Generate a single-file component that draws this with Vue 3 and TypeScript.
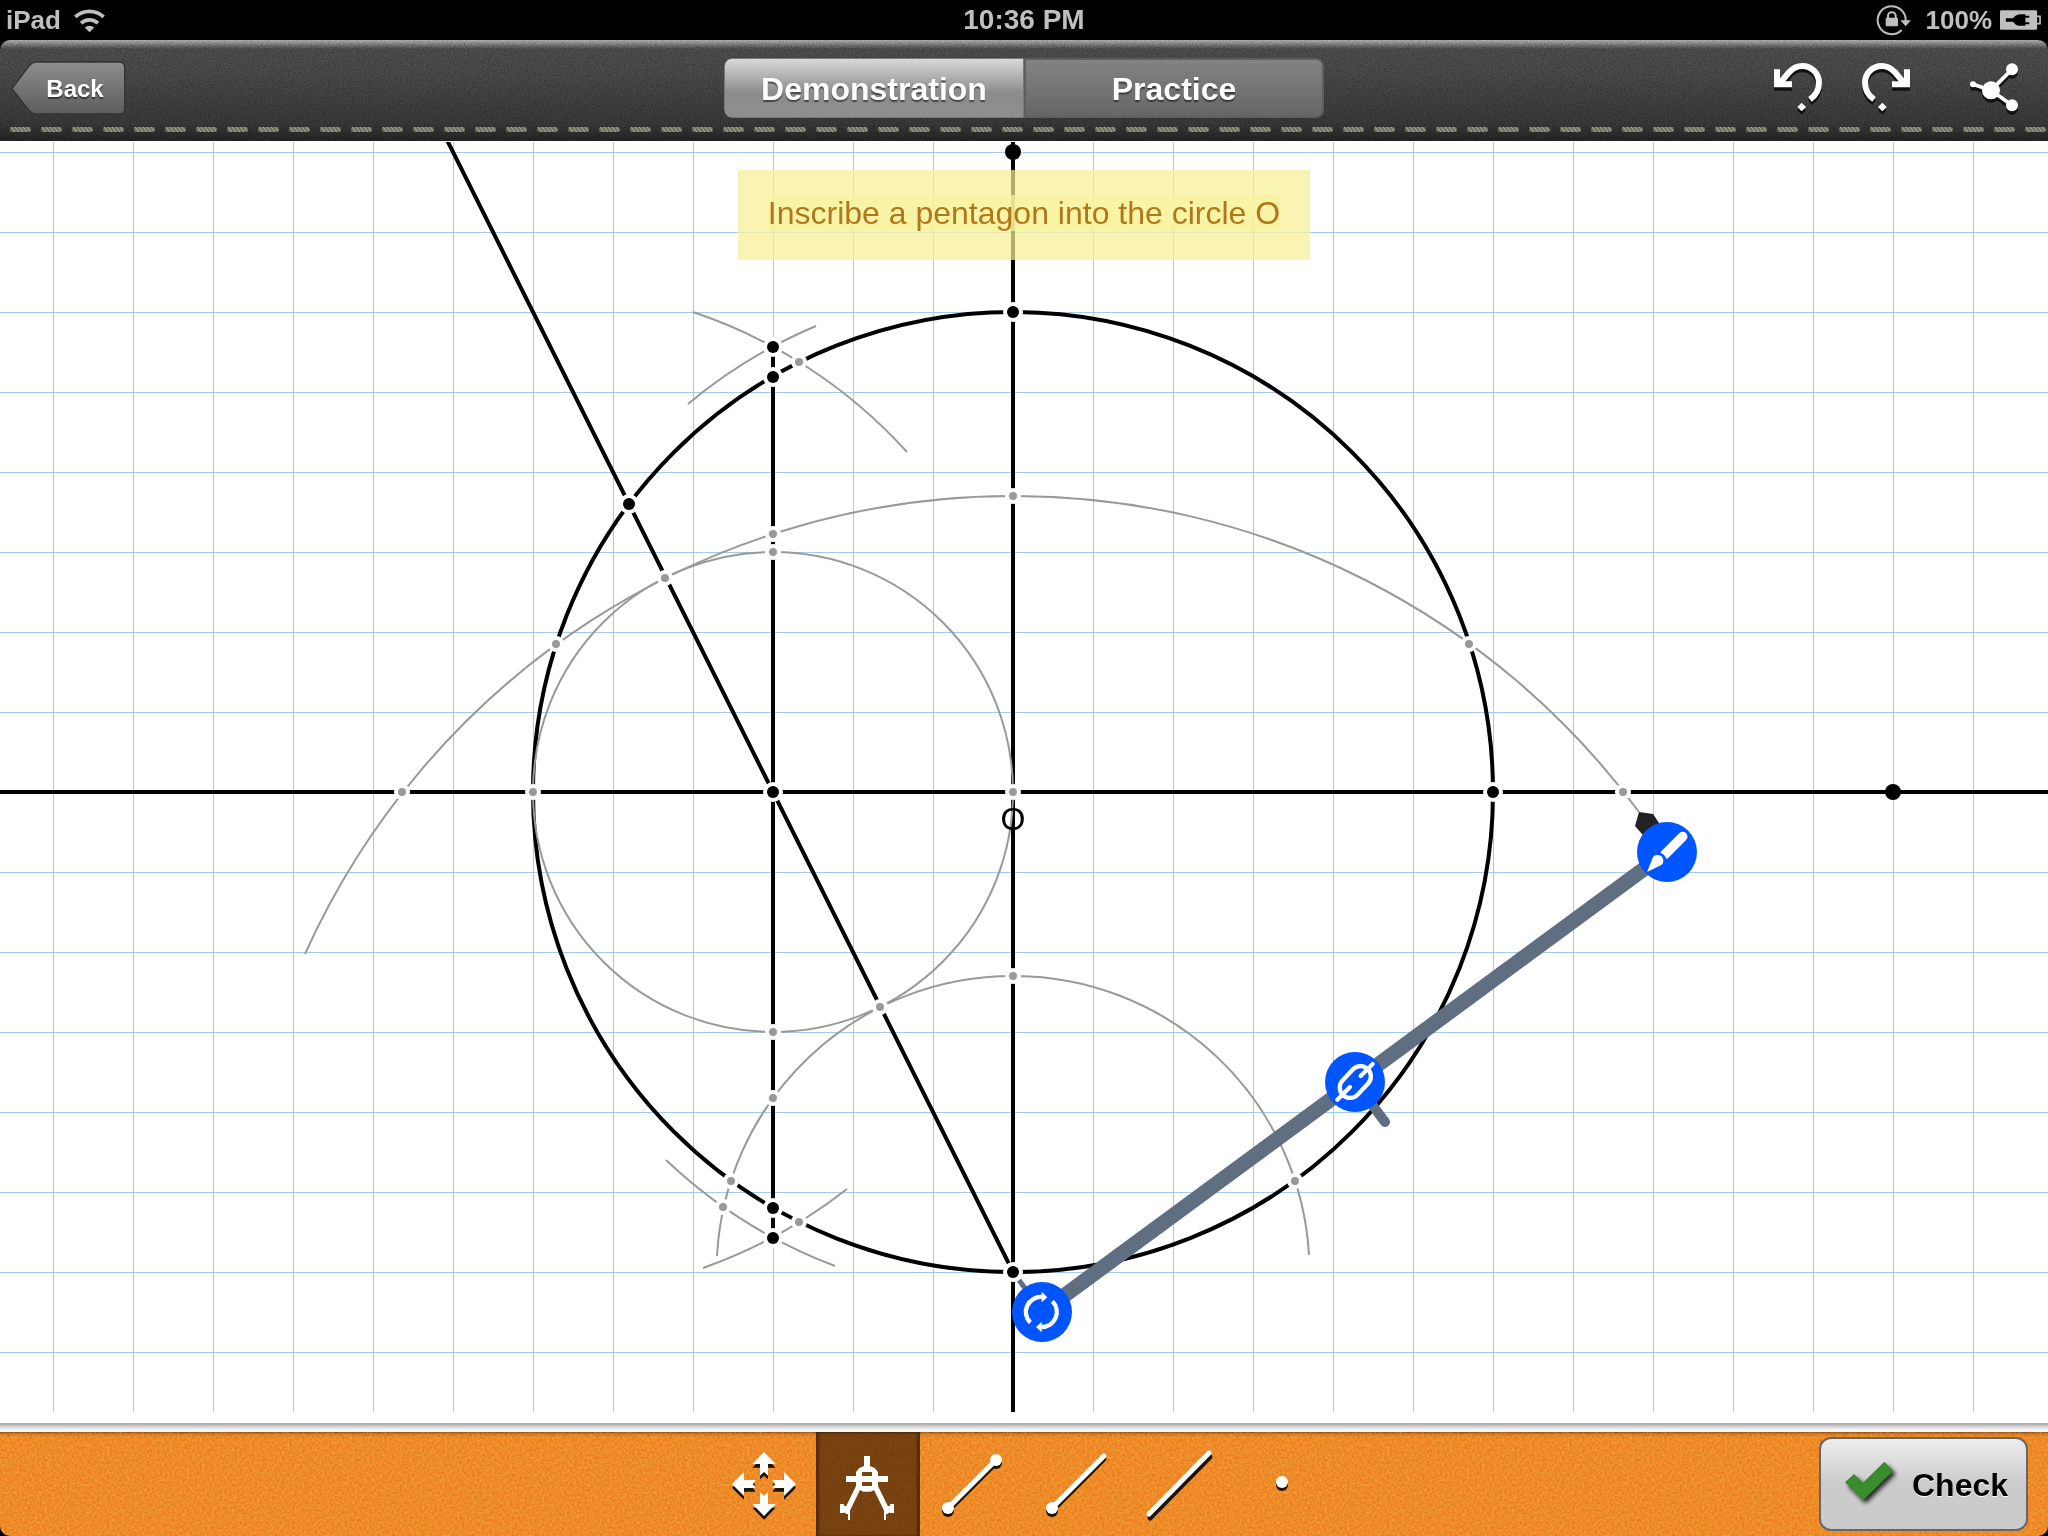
<script setup lang="ts">
import { ref } from 'vue'

interface Point { x: number; y: number }

const modes = ['Demonstration', 'Practice']
const activeMode = ref('Demonstration')
const activeTool = ref('compass')
const tools = ['move', 'compass', 'segment', 'ray', 'line', 'point']

const gridX: number[] = Array.from({ length: 25 }, (_, i) => 53 + i * 80)
const gridY: number[] = Array.from({ length: 16 }, (_, i) => 152 + i * 80)

const mainPoints: Point[] = [
  { x: 773, y: 347 }, { x: 773, y: 377 }, { x: 629, y: 504 }, { x: 1013, y: 312 },
  { x: 773, y: 792 }, { x: 1493, y: 792 }, { x: 1013, y: 1272 }, { x: 773, y: 1208 },
  { x: 773, y: 1238 },
]
const helperPoints: Point[] = [
  { x: 799, y: 362 }, { x: 773, y: 534 }, { x: 773, y: 552 }, { x: 1013, y: 496 },
  { x: 665, y: 578 }, { x: 556, y: 644 }, { x: 1469, y: 644 }, { x: 402, y: 792 },
  { x: 1623, y: 792 }, { x: 533, y: 792 }, { x: 1013, y: 792 }, { x: 773, y: 1032 },
  { x: 773, y: 1098 }, { x: 1013, y: 976 }, { x: 880, y: 1007 }, { x: 731, y: 1181 },
  { x: 723, y: 1207 }, { x: 1295, y: 1181 }, { x: 799, y: 1222 },
]
const freePoints: Point[] = [{ x: 1013, y: 152 }, { x: 1893, y: 792 }]
</script>

<template>
  <div class="app">
    <div class="status">
      <div class="status-side">
        <span class="device">iPad</span>
        <svg class="wifi" viewBox="221 22 98 74" aria-hidden="true">
          <path d="M228 48A62 62 0 0 1 312 48M245 67A36 36 0 0 1 295 67" fill="none" stroke="#bfbfbf" stroke-width="11" />
          <path d="M270 94L256 80A20 20 0 0 1 284 80Z" fill="#bfbfbf" />
        </svg>
      </div>
      <span class="clock">10:36 PM</span>
      <div class="status-side right">
        <svg class="lock" viewBox="468 9 108 96" aria-hidden="true">
          <path d="M545 87A42 42 0 1 1 557 60" fill="none" stroke="#bfbfbf" stroke-width="6" />
          <path d="M541 58H573L557 76Z" fill="#bfbfbf" />
          <rect x="497" y="50" width="37" height="26" rx="3" fill="#bfbfbf" />
          <path d="M504 52V44A11 10 0 0 1 527 44V52" fill="none" stroke="#bfbfbf" stroke-width="6" />
        </svg>
        <span class="percent">100%</span>
        <svg class="battery" viewBox="840 24 129 66" aria-hidden="true">
          <rect x="840" y="27" width="114" height="60" rx="4" fill="#bfbfbf" />
          <path d="M954 46H963V68H954" fill="none" stroke="#bfbfbf" stroke-width="5" />
          <path d="M858 52H880Q888 40 900 39H918V44H930V50H918V64H930V70H918V75H900Q888 74 880 62H858Z" fill="#000" />
        </svg>
      </div>
    </div>

    <header class="bar">
      <svg class="grain" aria-hidden="true">
        <filter id="leather" x="0" y="0" width="100%" height="100%" color-interpolation-filters="sRGB">
          <feTurbulence type="fractalNoise" baseFrequency="0.7" numOctaves="2" seed="4" />
          <feColorMatrix values="1 0 0 0 0 1 0 0 0 0 1 0 0 0 0 0 0 0 0 1" />
        </filter>
        <rect width="100%" height="100%" filter="url(#leather)" opacity="0.3" />
      </svg>
      <svg class="stitches" aria-hidden="true">
        <defs>
          <pattern id="stitch" x="10" y="0" width="31" height="5" patternUnits="userSpaceOnUse">
            <rect width="21" height="5" rx="2" fill="#6b6c60" />
            <path d="M1 0L5 5M5 0L9 5M9 0L13 5M13 0L17 5M17 0L20 4" stroke="#b4b5a6" stroke-width="1" />
          </pattern>
        </defs>
        <rect width="100%" height="5" fill="url(#stitch)" />
      </svg>
      <div class="bar-side">
        <button class="back" type="button">
          <svg viewBox="33 182 345 162" aria-hidden="true">
            <defs>
              <linearGradient id="backFill" x1="0" y1="0" x2="0" y2="1">
                <stop offset="0" stop-color="#8e8e8e" />
                <stop offset="1" stop-color="#5c5c5c" />
              </linearGradient>
            </defs>
            <path d="M36 265L88 196Q97 185 110 185H358Q374 185 374 201V325Q374 341 358 341H110Q97 341 88 331Z" fill="url(#backFill)" stroke="#333" stroke-width="4" />
          </svg>
          <span>Back</span>
        </button>
      </div>
      <div class="modes" role="group" aria-label="Mode">
        <button
          v-for="mode in modes"
          :key="mode"
          type="button"
          class="mode"
          :class="{ active: activeMode === mode }"
          :aria-pressed="activeMode === mode"
          @click="activeMode = mode"
        >{{ mode }}</button>
      </div>
      <div class="bar-side actions">
        <button type="button" class="action" aria-label="Undo">
          <svg viewBox="159 188 150 168" aria-hidden="true">
            <g v-for="layer in 2" :key="layer" :class="layer === 1 ? 'shade' : 'face'" :transform="layer === 1 ? 'translate(0 10)' : undefined">
              <path class="stroke" d="M176 256L207 219Q225 200 247 200A50 50 0 0 1 297 250Q297 281 270 300" stroke-width="18" />
              <path class="fill" d="M162 210H180V246H216V264H162ZM245 310L258 323L245 336L232 323Z" />
            </g>
          </svg>
        </button>
        <button type="button" class="action" aria-label="Redo">
          <svg viewBox="423 188 150 168" aria-hidden="true">
            <g v-for="layer in 2" :key="layer" :class="layer === 1 ? 'shade' : 'face'" :transform="layer === 1 ? 'translate(0 10)' : undefined">
              <path class="stroke" d="M556 256L525 219Q507 200 485 200A50 50 0 0 0 435 250Q435 281 462 300" stroke-width="18" />
              <path class="fill" d="M570 210H552V246H516V264H570ZM487 310L500 323L487 336L474 323Z" />
            </g>
          </svg>
        </button>
        <button type="button" class="action share" aria-label="Share">
          <svg viewBox="747 188 150 168" aria-hidden="true">
            <g v-for="layer in 2" :key="layer" :class="layer === 1 ? 'shade' : 'face'" :transform="layer === 1 ? 'translate(0 10)' : undefined">
              <path class="stroke" d="M759 255L813 273L876 210M813 273L876 318" stroke-width="11" />
              <circle class="fill" cx="759" cy="255" r="9" />
              <circle class="fill" cx="813" cy="273" r="27" />
              <circle class="fill" cx="876" cy="210" r="18" />
              <circle class="fill" cx="876" cy="318" r="18" />
            </g>
          </svg>
        </button>
      </div>
    </header>

    <main class="board">
      <svg class="drawing" viewBox="0 141 2048 1282" preserveAspectRatio="xMidYMid slice" role="img" aria-label="Pentagon construction">
        <clipPath id="sheet"><rect x="0" y="142" width="2048" height="1270" /></clipPath>
        <g clip-path="url(#sheet)">
          <g fill="#a6cbe6">
            <rect v-for="x in gridX" :key="'x' + x" :x="x" y="142" width="1" height="1270" />
            <rect v-for="y in gridY" :key="'y' + y" x="0" :y="y" width="2048" height="1" />
          </g>
          <g fill="none" stroke="#000" stroke-width="4">
            <circle cx="1013" cy="792" r="480" />
            <path d="M0 792H2048M1013 142V1412M773 347V1238M1013 1272L433 112" />
          </g>
          <g fill="none" stroke="#999" stroke-width="2">
            <circle cx="773" cy="792" r="240" />
            <path d="M305 954A776 776 0 0 1 1013 496A776 776 0 0 1 1639 812" />
            <path d="M717 1256A296 296 0 0 1 1013 976A296 296 0 0 1 1309 1255" />
            <path d="M693 312A506 506 0 0 1 907 452" />
            <path d="M688 404A506 506 0 0 1 816 326" />
            <path d="M666 1160A506 506 0 0 0 835 1266" />
            <path d="M703 1268A506 506 0 0 0 847 1189" />
          </g>
          <path d="M1019 1280L1042 1312" stroke="#5f6e80" stroke-width="5" />
          <g fill="#fff">
            <circle v-for="(p, i) in mainPoints" :key="i" :cx="p.x" :cy="p.y" r="10" />
            <circle v-for="(p, i) in helperPoints" :key="i" :cx="p.x" :cy="p.y" r="8" />
          </g>
          <circle v-for="(p, i) in helperPoints" :key="'h' + i" :cx="p.x" :cy="p.y" r="4" fill="#999" />
          <circle v-for="(p, i) in mainPoints" :key="'m' + i" :cx="p.x" :cy="p.y" r="6" fill="#000" />
          <circle v-for="(p, i) in freePoints" :key="'f' + i" :cx="p.x" :cy="p.y" r="8" fill="#000" />
          <text class="label" x="1013" y="830">O</text>

          <path d="M1639 812L1653 814L1661 826L1648 840L1642 834L1635 826Z" fill="#222" />
          <g stroke="#5f6e80" fill="none">
            <path d="M1042 1312L1667 852" stroke-width="15" />
            <path d="M1355 1082L1385 1122" stroke-width="10" stroke-linecap="round" />
          </g>
          <g fill="#0055ff">
            <circle cx="1042" cy="1312" r="30" />
            <circle cx="1355" cy="1082" r="30" />
            <circle cx="1667" cy="852" r="30" />
          </g>
          <g transform="translate(980 1220) scale(0.3333)" fill="none" stroke="#fff" stroke-width="13">
            <path d="M151 308A45 45 0 0 1 186 231M217 244A45 45 0 0 1 184 321" />
            <path d="M185 215L202 232L185 247ZM185 305L168 321L185 337Z" fill="#fff" stroke="none" />
          </g>
          <g transform="translate(1300 1020) scale(0.3333)" fill="none" stroke="#fff" stroke-width="13" stroke-linecap="round">
            <rect x="112" y="155" width="108" height="62" rx="31" transform="rotate(-47 166 186)" />
            <path d="M218 132L182 168M112 239L150 201" />
          </g>
          <g transform="translate(1590 770) scale(0.3333)">
            <path d="M278 200L225 253" stroke="#fff" stroke-width="29" stroke-linecap="round" />
            <circle cx="203" cy="274" r="27" fill="#0055ff" />
            <path d="M171 306L186 269A17 17 0 1 1 208 288Z" fill="#fff" />
          </g>
        </g>
      </svg>
      <p class="note"><span>Inscribe a pentagon into the circle O</span></p>
    </main>

    <footer class="foot">
      <div class="toolbar">
        <svg class="grain" aria-hidden="true">
          <filter id="felt" x="0" y="0" width="100%" height="100%" color-interpolation-filters="sRGB">
            <feTurbulence type="fractalNoise" baseFrequency="0.4" numOctaves="3" seed="9" />
            <feColorMatrix values="1 0 0 0 0 1 0 0 0 0 1 0 0 0 0 0 0 0 0 1" />
          </filter>
          <rect width="100%" height="100%" filter="url(#felt)" opacity="0.3" />
        </svg>
        <div class="foot-side"></div>
        <div class="tools" role="group" aria-label="Tools">
          <button
            v-for="tool in tools"
            :key="tool"
            type="button"
            class="tool"
            :class="{ active: activeTool === tool }"
            :aria-label="tool"
            :aria-pressed="activeTool === tool"
            @click="activeTool = tool"
          >
            <svg v-if="tool === 'move'" viewBox="-36 18 312 312" aria-hidden="true">
              <g v-for="layer in 2" :key="layer" :class="layer === 1 ? 'shade' : 'face'" :transform="layer === 1 ? 'translate(0 11)' : undefined">
                <path class="fill" d="M120 78L155 114H132V149L120 138L108 149V114H85Z" />
                <path class="fill" d="M120 270L155 234H132V199L120 210L108 199V234H85Z" />
                <path class="fill" d="M24 174L60 138V162H95L86 174L95 186H60V210Z" />
                <path class="fill" d="M216 174L180 138V162H145L154 174L145 186H180V210Z" />
              </g>
            </svg>
            <svg v-else-if="tool === 'compass'" viewBox="276 18 312 312" aria-hidden="true">
              <g fill="#fff">
                <path fill-rule="evenodd" d="M420 90H438V120L452 126L462 138V150H492V168H462V180L500 258L489 264L484 262L450 192L440 197H418L408 192L374 262L369 264L358 258L396 180V168H366V150H396V138L406 126L420 120ZM414 138V150H444V138ZM414 168V180H444V168Z" />
                <path d="M348 234H360V240H372V255H360V261H348ZM510 234H498V240H486V255H498V261H510ZM366 250H378V282H372V264H366ZM492 250H480V282H486V264H492Z" />
              </g>
            </svg>
            <svg v-else viewBox="0 0 104 104" aria-hidden="true">
              <g v-for="layer in 2" :key="layer" :class="layer === 1 ? 'shade' : 'face'" :transform="layer === 1 ? (tool === 'line' ? 'translate(1 4)' : 'translate(0 3)') : undefined">
                <template v-if="tool === 'segment'">
                  <path class="stroke" d="M28 76L76 28" stroke-width="5" />
                  <circle class="fill" cx="28" cy="76" r="6" />
                  <circle class="fill" cx="76" cy="28" r="6" />
                </template>
                <template v-else-if="tool === 'ray'">
                  <path class="stroke" d="M28 76L80 24" stroke-width="5" stroke-linecap="round" />
                  <circle class="fill" cx="28" cy="76" r="6" />
                </template>
                <path v-else-if="tool === 'line'" class="stroke" d="M21 82L81 21" stroke-width="5" stroke-linecap="round" />
                <circle v-else class="fill" cx="50" cy="50" r="6" />
              </g>
            </svg>
          </button>
        </div>
        <div class="foot-side end">
          <button type="button" class="check">
            <svg viewBox="192 184 168 144" aria-hidden="true">
              <path class="tick" d="M195 251L222 226L249 252L313 189L340 216L249 305Z" fill="#3b8c2e" />
            </svg>
            <span>Check</span>
          </button>
        </div>
      </div>
    </footer>
  </div>
</template>

<style>
body {
  margin: 0;
  background: #000;
}
</style>

<style scoped>
.app {
  display: flex;
  flex-direction: column;
  height: 100vh;
  overflow: hidden;
  background: #000;
  font-family: "Liberation Sans", Arial, Helvetica, sans-serif;
}
button {
  margin: 0;
  padding: 0;
  border: 0;
  background: none;
  font-family: inherit;
  cursor: pointer;
}
svg {
  display: block;
}
.shade .fill { fill: #1c140a; }
.shade .stroke { fill: none; stroke: #1c140a; }
.face .fill { fill: #fff; }
.face .stroke { fill: none; stroke: #fff; }

.status {
  display: flex;
  align-items: center;
  flex: none;
  height: 40px;
  padding: 0 6px;
  color: #bfbfbf;
  font-weight: bold;
  font-size: 26px;
  line-height: 40px;
}
.status-side {
  display: flex;
  align-items: center;
  flex: 1;
}
.status-side.right {
  justify-content: flex-end;
}
.device { margin-right: 12px; }
.clock { font-size: 28px; }
.percent { margin: 0 8px 0 14px; }
.wifi { width: 33px; height: 25px; }
.lock { width: 36px; height: 32px; }
.battery { width: 42px; height: 22px; }

.bar {
  position: relative;
  display: flex;
  align-items: center;
  flex: none;
  box-sizing: border-box;
  height: 101px;
  padding: 0 11px 5px;
  overflow: hidden;
  border-radius: 10px 10px 0 0;
  background: linear-gradient(#aaa 0, #8a8a8a 3px, #666 6px, #484848 9px, #464646 30px, #353535 84px, #222 100%);
}
.grain {
  position: absolute;
  inset: 0;
  width: 100%;
  height: 100%;
  mix-blend-mode: overlay;
}
.stitches {
  position: absolute;
  left: 0;
  bottom: 9px;
  width: 100%;
  height: 5px;
}
.bar-side {
  position: relative;
  display: flex;
  align-items: center;
  flex: 1;
}
.actions {
  justify-content: flex-end;
  gap: 38px;
  padding-top: 4px;
}
.action svg {
  width: 50px;
  height: 56px;
}
.actions .share { margin: 0 18px 0 20px; }
.actions .shade .fill { fill: #111; }
.actions .shade .stroke { stroke: #111; }
.back {
  display: grid;
  width: 115px;
  height: 54px;
  color: #fff;
  font-weight: bold;
  font-size: 24px;
  line-height: 56px;
  text-shadow: 0 2px 1px rgba(0, 0, 0, 0.5);
}
.back svg {
  grid-area: 1 / 1;
  width: 115px;
  height: 54px;
}
.back span {
  position: relative;
  grid-area: 1 / 1;
  padding-left: 13px;
}
.modes {
  position: relative;
  display: flex;
  overflow: hidden;
  border-radius: 8px;
}
.mode {
  box-sizing: border-box;
  width: 300px;
  height: 60px;
  padding-top: 2px;
  border: 2px solid #5f5f5f;
  background: linear-gradient(#838383, #666);
  color: #fff;
  font-weight: bold;
  font-size: 32px;
  line-height: 54px;
  text-shadow: 0 2px 1px rgba(0, 0, 0, 0.5);
}
.mode:last-child { border-radius: 0 8px 8px 0; }
.mode.active {
  border: 1px solid #777;
  border-radius: 8px 0 0 8px;
  background: linear-gradient(#d9d9d9, #8c8c8c 58%, #8e8e8e);
}

.board {
  position: relative;
  flex: 1;
  min-height: 0;
  background: #fff;
}
.drawing {
  position: absolute;
  inset: 0;
  width: 100%;
  height: 100%;
}
.label {
  font-size: 32px;
  text-anchor: middle;
}
.note {
  position: relative;
  width: fit-content;
  margin: 29px auto 0;
  padding: 24px 30px 28px;
  background: rgba(247, 240, 150, 0.72);
  color: #b0781a;
  font-size: 32px;
  line-height: 38px;
}
.note span { background: rgba(249, 243, 160, 0.7); }

.foot {
  flex: none;
  padding-top: 9px;
  background: linear-gradient(#b0b0b0 2px, #cbcbcb 2px, #cbcbcb 4px, #e2e2e2 4px, #e2e2e2 6px, #f6f6f6 6px, #f6f6f6 9px, #000 9px);
}
.toolbar {
  position: relative;
  display: flex;
  align-items: stretch;
  overflow: hidden;
  height: 104px;
  padding: 0 20px;
  border-radius: 0 0 10px 10px;
  background: linear-gradient(#8f5319 0, #d67c24 2px, #ee8b28 5px);
}
.foot-side {
  position: relative;
  display: flex;
  align-items: center;
  flex: 1;
}
.foot-side.end {
  justify-content: flex-end;
}
.tools {
  position: relative;
  display: flex;
}
.tool {
  width: 104px;
}
.tool svg {
  width: 104px;
  height: 104px;
}
.tool.active {
  background: rgba(74, 38, 5, 0.72);
  box-shadow: inset 3px 0 2px rgba(50, 24, 0, 0.5), inset -3px 0 2px rgba(50, 24, 0, 0.5);
}
.check {
  display: flex;
  align-items: center;
  box-sizing: border-box;
  width: 209px;
  height: 94px;
  padding-left: 23px;
  border: 2px solid #666;
  border-radius: 12px;
  background: linear-gradient(#eee, #cbcbcb 50%, #cbcbcb);
  color: #000;
  font-weight: bold;
  font-size: 32px;
}
.check svg {
  overflow: visible;
  width: 56px;
  height: 48px;
  margin-right: 12px;
}
.check span {
  padding-top: 2px;
  text-shadow: 0 1px 0 #fff;
}
.tick { filter: drop-shadow(8px 10px 6px rgba(0, 0, 0, 0.8)); }
</style>
